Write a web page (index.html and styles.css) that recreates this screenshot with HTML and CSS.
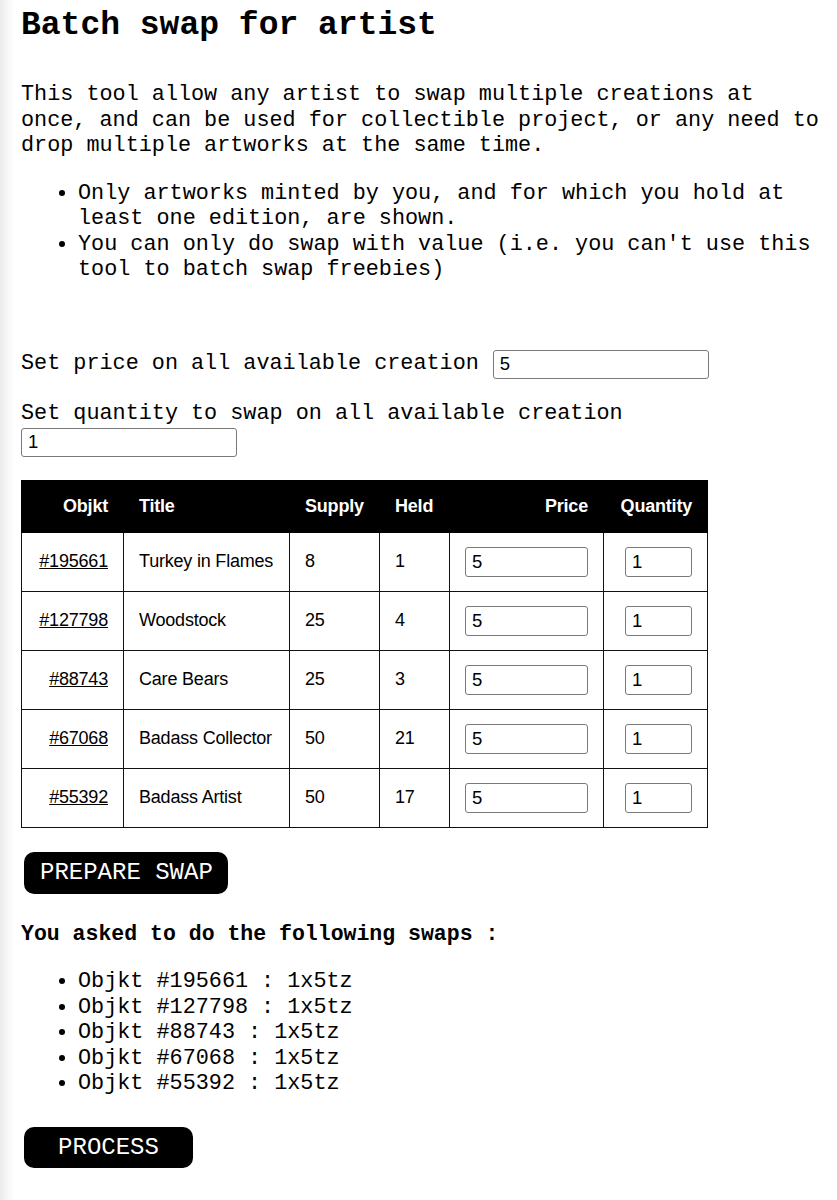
FILE: index.html
```html
<!DOCTYPE html>
<html lang="en">
<head>
    <meta charset="UTF-8">
    <meta name="viewport" content="width=device-width, initial-scale=1.0">
    <title>Batch swap for artist</title>
    <link rel="stylesheet" href="styles.css">
</head>
<body>
    <div class="page">
        <h1 class="title">Batch swap for artist</h1>
        <p class="intro">This tool allow any artist to swap multiple creations at once, and can be used for collectible project, or any need to drop multiple artworks at the same time.</p>
        <ul class="list notes">
            <li>Only artworks minted by you, and for which you hold at least one edition, are shown.</li>
            <li>You can only do swap with value (i.e. you can't use this tool to batch swap freebies)</li>
        </ul>

        <div class="field field-price">
            <label for="price-all">Set price on all available creation</label>
            <input type="text" id="price-all" class="input input-wide" value="5">
        </div>
        <div class="field field-qty">
            <label for="qty-all">Set quantity to swap on all available creation</label>
            <input type="text" id="qty-all" class="input input-wide" value="1">
        </div>

        <table class="swaps">
            <colgroup>
                <col class="col-objkt">
                <col class="col-title">
                <col class="col-supply">
                <col class="col-held">
                <col class="col-price">
                <col class="col-qty">
            </colgroup>
            <thead>
                <tr>
                    <th class="right">Objkt</th>
                    <th>Title</th>
                    <th>Supply</th>
                    <th>Held</th>
                    <th class="right">Price</th>
                    <th class="right">Quantity</th>
                </tr>
            </thead>
            <tbody>
                <tr>
                    <td class="right"><a href="#">#195661</a></td>
                    <td>Turkey in Flames</td>
                    <td>8</td>
                    <td>1</td>
                    <td class="right"><input type="text" class="input input-price" value="5"></td>
                    <td class="right"><input type="text" class="input input-qty" value="1"></td>
                </tr>
                <tr>
                    <td class="right"><a href="#">#127798</a></td>
                    <td>Woodstock</td>
                    <td>25</td>
                    <td>4</td>
                    <td class="right"><input type="text" class="input input-price" value="5"></td>
                    <td class="right"><input type="text" class="input input-qty" value="1"></td>
                </tr>
                <tr>
                    <td class="right"><a href="#">#88743</a></td>
                    <td>Care Bears</td>
                    <td>25</td>
                    <td>3</td>
                    <td class="right"><input type="text" class="input input-price" value="5"></td>
                    <td class="right"><input type="text" class="input input-qty" value="1"></td>
                </tr>
                <tr>
                    <td class="right"><a href="#">#67068</a></td>
                    <td>Badass Collector</td>
                    <td>50</td>
                    <td>21</td>
                    <td class="right"><input type="text" class="input input-price" value="5"></td>
                    <td class="right"><input type="text" class="input input-qty" value="1"></td>
                </tr>
                <tr>
                    <td class="right"><a href="#">#55392</a></td>
                    <td>Badass Artist</td>
                    <td>50</td>
                    <td>17</td>
                    <td class="right"><input type="text" class="input input-price" value="5"></td>
                    <td class="right"><input type="text" class="input input-qty" value="1"></td>
                </tr>
            </tbody>
        </table>

        <button class="btn btn-prepare">PREPARE SWAP</button>

        <h3 class="summary-title">You asked to do the following swaps :</h3>
        <ul class="list summary">
            <li>Objkt #195661 : 1x5tz</li>
            <li>Objkt #127798 : 1x5tz</li>
            <li>Objkt #88743 : 1x5tz</li>
            <li>Objkt #67068 : 1x5tz</li>
            <li>Objkt #55392 : 1x5tz</li>
        </ul>

        <button class="btn btn-process">PROCESS</button>
    </div>
</body>
</html>
```

FILE: styles.css
```css
body {
    margin: 0;
    font-family: "Liberation Mono", "Courier New", monospace;
    font-size: 21.8px;
    line-height: 25.5px;
    color: #000;
    background: linear-gradient(to right, #ebebeb 0, #f7f7f7 8px, #fff 15px);
    min-height: 100vh;
}
.page {
    padding: 6px 10px 40px 21px;
}
.title {
    margin: 0;
    font-size: 33px;
    line-height: 40px;
    font-weight: bold;
}
.intro {
    margin: 36px 0 0;
}
.list {
    margin: 0;
    padding-left: 57px;
}
.notes {
    margin-top: 22px;
}
.field label {
    white-space: nowrap;
}
.field-price {
    display: flex;
    align-items: center;
    gap: 14px;
    margin-top: 67px;
}
.field-qty {
    margin-top: 22px;
}
.field-qty .input {
    display: block;
    margin-top: 1.5px;
}
.input {
    box-sizing: border-box;
    height: 29px;
    padding: 0 6px;
    border: 1px solid #7a7a7a;
    border-radius: 3px;
    font-family: "Liberation Sans", Arial, sans-serif;
    font-size: 18.5px;
    color: #000;
    background: #fff;
}
.input-wide {
    width: 216px;
}
.input-price {
    width: 123px;
}
.input-qty {
    width: 67px;
}

/* table of creations */
.swaps {
    margin-top: 23px;
    width: 686px;
    table-layout: fixed;
    border-collapse: collapse;
    font-family: "Liberation Sans", Arial, sans-serif;
    font-size: 18px;
    line-height: 21px;
    letter-spacing: -0.2px;
}
.col-objkt { width: 102px; }
.col-title { width: 166px; }
.col-supply { width: 90px; }
.col-held { width: 70px; }
.col-price { width: 154px; }
.col-qty { width: 104px; }
.swaps th {
    background: #000;
    color: #fff;
    font-weight: bold;
    text-align: left;
    padding: 15px 15px;
    border: 1px solid #000;
}
.swaps td {
    padding: 14px 15px;
    border: 1px solid #111;
    text-align: left;
    vertical-align: middle;
    white-space: nowrap;
}
.swaps td .input {
    display: inline-block;
    vertical-align: middle;
    height: 30px;
}
.swaps .right {
    text-align: right;
}
.swaps a {
    color: #000;
    text-decoration: underline;
}

.btn {
    display: block;
    background: #000;
    color: #fff;
    border: none;
    border-radius: 10px;
    font-family: "Liberation Mono", "Courier New", monospace;
    font-size: 24px;
    cursor: pointer;
}
.btn-prepare {
    margin-top: 24px;
    height: 42px;
    padding: 0 15px 0 16px;
    margin-left: 3px;
}
.btn-process {
    margin-top: 30px;
    height: 41px;
    width: 169px;
    margin-left: 3px;
}
.summary-title {
    margin: 28px 0 0;
    font-size: 21.5px;
    line-height: 25.5px;
    font-weight: bold;
}
.summary {
    margin-top: 22px;
}
```
